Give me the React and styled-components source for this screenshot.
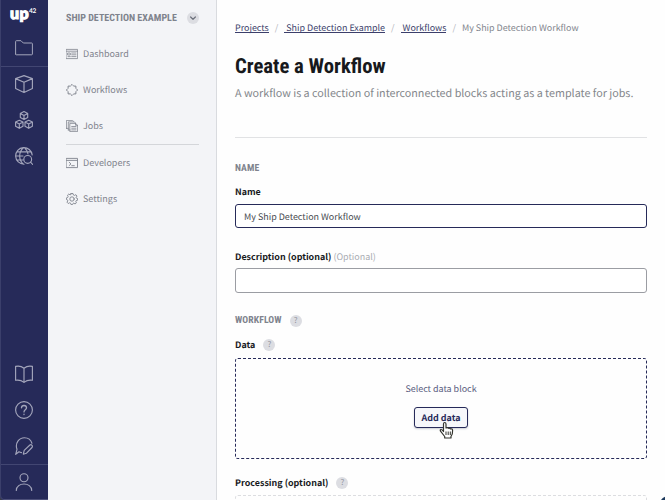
import React from 'react';
import styled, { createGlobalStyle, css } from 'styled-components';

const Global = createGlobalStyle`
  * { box-sizing: border-box; }
  html, body { margin: 0; padding: 0; overflow: hidden; background: #fefefe; }
  body {
    font-family: "Noto Sans CJK SC", "Noto Sans", sans-serif;
    font-size: 10px;
    color: #17191c;
    text-rendering: geometricPrecision;
  }
`;

const condensed = css`
  font-family: Roboto, sans-serif;
  font-weight: 700;
  font-stretch: 75%;
  white-space: nowrap;
`;

const Page = styled.div`
  position: relative;
  display: flex;
  width: 665px;
  height: 500px;
  overflow: hidden;
`;

const RailCorner = styled.div`
  flex: 0 0 48px;
  display: flex;
  background: #3c3f46;
`;

const Rail = styled.nav`
  display: flex;
  flex-direction: column;
  flex: 0 0 48px;
  background: #262a59;
  border-left: 1px solid #3b3f6b;
  box-shadow: inset 0 -1px 0 #4d507a;
  border-bottom-left-radius: 4px;
`;

const Logo = styled.div`
  display: flex;
  height: 30px;
  padding: 6px 0 0 9px;
`;

const RailItem = styled.a`
  display: flex;
  align-items: center;
  justify-content: center;
  height: 36px;
  padding-right: 1px;
  color: #a3a5bb;
`;

const RailRule = styled.div`
  height: 1px;
  margin-bottom: -1px;
  background: #424672;
`;

const Spacer = styled.div`
  flex: 1;
`;

const Panel = styled.aside`
  flex: 0 0 169px;
  padding: 11px 17px 0 18px;
  background: #f3f4f7;
  border-right: 1px solid #d9dbdf;
`;

const ProjectHeader = styled.div`
  display: flex;
  align-items: center;
  justify-content: space-between;
  height: 13px;
  margin-bottom: 12px;
`;

const ProjectName = styled.div`
  ${condensed}
  padding-top: 1px;
  font-size: 10px;
  line-height: 13px;
  color: #7f838d;
`;

const Round = styled.span`
  display: flex;
  align-items: center;
  justify-content: center;
  width: 12px;
  height: 12px;
  border-radius: 50%;
  background: #dcdde2;
  color: #6d717c;
`;

const NavItem = styled.a`
  display: flex;
  align-items: center;
  gap: 5px;
  height: 36px;
  font-size: 9px;
  line-height: 14px;
  color: #7f838d;
`;

const NavRule = styled.div`
  height: 1px;
  background: #d4d6da;
`;

const Main = styled.main`
  flex: 1;
  padding: 21px 18px 0;
  display: flex;
  flex-direction: column;

  > * { flex-shrink: 0; }
`;

const Crumbs = styled.div`
  display: flex;
  height: 14px;
  font-size: 8.95px;
  line-height: 14px;
  color: #83868e;
  white-space: pre;
`;

const CrumbLink = styled.a`
  height: 12px;
  padding-left: ${(p) => p.$lead || 0}px;
  border-bottom: 1px solid #3c3f6b;
  color: #3c3f6b;
`;

const Slash = styled.span`
  width: 15.5px;
  text-align: center;
  color: #b3b5bb;
`;

const Title = styled.h1`
  ${condensed}
  margin: 18px 0 0;
  font-size: 20.7px;
  line-height: 28px;
`;

const Subtitle = styled.p`
  height: 46px;
  margin: 5px 0 0;
  font-size: 10.75px;
  line-height: 16px;
  white-space: nowrap;
  color: #83868b;
`;

const Rule = styled.div`
  height: 1px;
  margin-top: 5px;
  background: #e1e2e4;
`;

const Section = styled.h2`
  ${condensed}
  display: flex;
  align-items: center;
  gap: 8px;
  height: 12px;
  margin: ${(p) => p.$top}px 0 0;
  font-size: 9.7px;
  letter-spacing: 0.1px;
  line-height: 12px;
  color: #7f838d;
`;

const Label = styled.label`
  display: flex;
  align-items: center;
  gap: ${(p) => p.$gap || 8}px;
  height: 14px;
  margin-top: ${(p) => p.$top}px;
  font-size: 8.95px;
  font-weight: 700;
  line-height: 14px;
  white-space: nowrap;
`;

const Optional = styled.span`
  font-weight: 400;
  color: #a9abb2;
`;

const Field = styled.input`
  display: block;
  width: 412px;
  height: ${(p) => p.$height}px;
  margin-top: ${(p) => p.$top}px;
  padding: 0 8px;
  border: 1px solid ${(p) => (p.$active ? '#262a59' : '#9b9da3')};
  border-radius: 3px;
  outline: none;
  background: #fff;
  font: 8.95px/14px "Noto Sans CJK SC", sans-serif;
  text-rendering: geometricPrecision;
  color: #484b50;
`;

const Help = styled(Round)`
  font: 400 8px/12px "Noto Sans CJK SC", sans-serif;
  letter-spacing: 0;
  color: #8e919b;
`;

const Drop = styled.section`
  display: flex;
  flex-direction: column;
  align-items: center;
  flex: 0 0 101px;
  width: 412px;
  margin-top: ${(p) => p.$top}px;
  padding-top: 23px;
  border: 1px dashed ${(p) => (p.$muted ? '#dcdde0' : '#262a59')};
  border-radius: 3px;
`;

const Hint = styled.div`
  font-size: 8.95px;
  line-height: 14px;
  color: #5a5d80;
`;

const AddButton = styled.button`
  position: relative;
  width: 54px;
  height: 21px;
  margin-top: 11px;
  padding: 0;
  border: 1px solid #262a59;
  border-radius: 3px;
  background: #f6f7fa;
  box-shadow: 0 1px 2px #c9ccd2;
  font: 700 8.95px/17px "Noto Sans CJK SC", sans-serif;
  text-rendering: geometricPrecision;
  white-space: nowrap;
  color: #262a59;
`;

const Pointer = styled.svg`
  position: absolute;
  left: 23px;
  top: 13px;
`;

const ChatCorner = styled.svg`
  position: absolute;
  right: 0;
  bottom: 0;
`;

function Icon({ size = 18, stroke = 1, children }) {
  return (
    <svg width={size} height={size} viewBox={`0 0 ${size} ${size}`} fill="none" stroke="currentColor"
      strokeWidth={stroke} strokeLinejoin="round" strokeLinecap="round">
      {children}
    </svg>
  );
}

const Cube = ({ x, y }) => (
  <path transform={`translate(${x} ${y})`} d="M4 .3 7.7 2.1V6.3L4 8.3 .3 6.3V2.1ZM.3 2.1 4 4.1 7.7 2.1M4 4.1V8.3" />
);

const icons = {
  folder: <Icon><path d="M.6 15V2.5Q.6 1.7 1.4 1.7H6L8.3 4H16.6Q17.4 4 17.4 4.8V15Q17.4 15.8 16.6 15.8H1.4Q.6 15.8.6 15Z" /></Icon>,
  cube: <Icon stroke={1.15}><path d="M9 .6 17.4 3.6V13.6L9 17.4.6 13.6V3.6ZM.6 3.6 9 7.2 17.4 3.6M9 7.2V17.4" /></Icon>,
  cubes: <Icon stroke={1.15}><Cube x={5} y={0.3} /><Cube x={0.3} y={9} /><Cube x={9.7} y={9} /></Icon>,
  globe: (
    <Icon stroke={1.15}>
      <path d="M9 17.2A8.3 8.3 0 1 1 17.2 8M.8 9H8M2 4.8H15.5M1.8 13H8M8.5.8C3.4 5 3.4 13 8.5 17.2M9.5.8C11.5 2.5 12.7 5 13 7" />
      <circle cx="12.7" cy="12.4" r="3.9" /><path d="M15.5 15.2 17.7 17.4" />
    </Icon>
  ),
  book: <Icon stroke={1.15}><path d="M9 3.2C6.5 1.2 3.5.7.6 1.4V15.3C3.5 14.8 6.5 15.4 9 17.4 11.5 15.4 14.5 14.8 17.4 15.3V1.4C14.5.7 11.5 1.2 9 3.2ZM9 3.2V17.4" /></Icon>,
  help: (
    <Icon stroke={1.15}><circle cx="9" cy="9" r="8.4" /><path d="M6.5 6.8C6.6 3.7 11.5 3.8 11.5 6.8 11.5 8.7 9 8.7 9 10.9M9 13.2V13.5" strokeWidth="1.3" /></Icon>
  ),
  feedback: (
    <Icon stroke={1.15}>
      <path d="M6.5 15.6C5.5 15.4 4.8 15.2 4 14.8L.7 17.3 2 12.3C-.3 6 4.3.7 9.4.7 13.2.7 16 3 17 6.3" />
      <path d="M9.2 13.4 14.9 8Q16 7.3 17 8.3 17.8 9.5 17 10.5L11.3 16.3 8.3 17.2Z" />
    </Icon>
  ),
  user: <Icon stroke={1.15}><circle cx="9" cy="4.7" r="4" /><path d="M1.3 17.4C1.3 8.9 16.7 8.9 16.7 17.4" /></Icon>,
  dashboard: (
    <Icon size={12} stroke={0.8}><path d="M.4 1.4H11.6V10.6H.4ZM.4 3.2H11.6M2 5H4.3V7H2ZM2 8.6H4.3M5.7 5H10M5.7 6.8H10M5.7 8.6H10" /></Icon>
  ),
  workflows: (
    <Icon size={12} stroke={1}>
      <path d="M2.1 4.1V2.1H4.1M7.9 2.1H9.9V4.1M9.9 7.9V9.9H7.9M4.1 9.9H2.1V7.9" strokeDasharray="1.6 .8" />
      <path d="M4.9 1.5 6 .4 7.1 1.5M4.9 10.5 6 11.6 7.1 10.5M1.5 4.9.4 6 1.5 7.1M10.5 4.9 11.6 6 10.5 7.1" />
    </Icon>
  ),
  jobs: (
    <Icon size={12} stroke={0.8}>
      <path d="M4.2 3.4H9.5L11.6 5.3V11.6H4.2ZM9.5 3.4V5.3H11.6M5.7 6.5H10M5.7 8.2H10M5.7 9.9H10M2.3 10V1.9H8.4L9.3 2.8M.4 8.4V.4H6.5L7.4 1.2M.4 8.4H2.3M2.3 10H4.2" />
    </Icon>
  ),
  developers: <Icon size={12} stroke={0.9}><path d="M.5 1.4H11.5V10.6H.5ZM.5 3.4H11.5M3.2 5.3 5 6.9 3.2 8.5M5.7 8.7H8.3" /></Icon>,
  settings: (
    <Icon size={12} stroke={0.9}>
      <path d="M5 .5H7L7.4 2 8.6 2.4 9.9 1.7 11 3.1 10.1 4.4 10.4 5.2 11.6 5.5V7.2L10.2 7.6 9.8 8.5 10.4 9.9 9 11 7.8 10.1 7 10.4 6.6 11.6H5L4.6 10.2 3.6 9.8 2.2 10.5 1 9.2 1.8 7.8 1.5 6.9.4 6.5V4.9L1.7 4.5 2.1 3.5 1.5 2.2 2.8 1 4 1.9 4.7 1.6Z" />
      <circle cx="6" cy="6" r="2.2" />
    </Icon>
  ),
};

const LogoType = styled.div`
  display: flex;
  align-items: flex-start;
  height: 16px;
  color: #fff;
  font: 900 16px/16px Lato, sans-serif;
  letter-spacing: 0.4px;
  -webkit-text-stroke: 1.1px #fff;
`;

const LogoSup = styled.span`
  margin: 2px 0 0 0;
  font: 700 6.5px/7px Lato, sans-serif;
  letter-spacing: -0.2px;
  -webkit-text-stroke: 0;
`;

function HelpDot() {
  return <Help>?</Help>;
}

export default function App() {
  return (
    <>
      <Global />
      <Page>
        <RailCorner>
          <Rail>
            <Logo><LogoType>up<LogoSup>42</LogoSup></LogoType></Logo>
            <RailItem>{icons.folder}</RailItem>
            <RailRule />
            <RailItem>{icons.cube}</RailItem>
            <RailItem>{icons.cubes}</RailItem>
            <RailItem>{icons.globe}</RailItem>
            <Spacer />
            <RailItem>{icons.book}</RailItem>
            <RailItem>{icons.help}</RailItem>
            <RailItem>{icons.feedback}</RailItem>
            <RailRule />
            <RailItem>{icons.user}</RailItem>
          </Rail>
        </RailCorner>
        <Panel>
          <ProjectHeader>
            <ProjectName>SHIP DETECTION EXAMPLE</ProjectName>
            <Round><Icon size={12} stroke={1.2}><path d="M3.6 5 6 7.3 8.4 5" /></Icon></Round>
          </ProjectHeader>
          <NavItem>{icons.dashboard}Dashboard</NavItem>
          <NavItem>{icons.workflows}Workflows</NavItem>
          <NavItem>{icons.jobs}Jobs</NavItem>
          <NavRule />
          <NavItem>{icons.developers}Developers</NavItem>
          <NavItem>{icons.settings}Settings</NavItem>
        </Panel>
        <Main>
          <Crumbs>
            <CrumbLink>Projects</CrumbLink><Slash>/</Slash>
            <CrumbLink $lead={2}>Ship Detection Example</CrumbLink><Slash>/</Slash>
            <CrumbLink $lead={2}>Workflows</CrumbLink><Slash>/</Slash>
            <span>My Ship Detection Workflow</span>
          </Crumbs>
          <Title>Create a Workflow</Title>
          <Subtitle>A workflow is a collection of interconnected blocks acting as a template for jobs.</Subtitle>
          <Rule />
          <Section $top={25}>NAME</Section>
          <Label $top={10}>Name</Label>
          <Field $active $top={5} $height={24} defaultValue="My Ship Detection Workflow" />
          <Label $top={22} $gap={2}>Description (optional)<Optional>(Optional)</Optional></Label>
          <Field $top={4} $height={25} />
          <Section $top={22}>WORKFLOW<HelpDot /></Section>
          <Label $top={11}>Data<HelpDot /></Label>
          <Drop $top={6}>
            <Hint>Select data block</Hint>
            <AddButton>
              Add data
              <Pointer width="17" height="18" viewBox="0 0 17 18">
                <path d="M5.5 10.5V3Q5.5 1.5 6.7 1.5T8 3V7Q9.5 6 10.3 7.3 11.8 6.6 12.5 8 14.5 7.4 14.6 9.5 14.8 13 13 15.4V17H6.7V15.5L2.5 10.2Q1.8 8.7 3 8.5 4 8.4 5.5 10.5Z" fill="#fff" stroke="#34352f" strokeWidth="1.2" strokeLinejoin="round" />
                <path d="M8 10.5V14M10.2 10.5V14M12.3 10.5V14" stroke="#34352f" strokeWidth="1" />
              </Pointer>
            </AddButton>
          </Drop>
          <Label $top={17}>Processing (optional)<HelpDot /></Label>
          <Drop $top={5} $muted />
        </Main>
        <ChatCorner width="4" height="4" viewBox="0 0 4 4">
          <path d="M0 4Q1.5 1.5 4 .8V4Z" fill="#1d3a5d" />
        </ChatCorner>
      </Page>
    </>
  );
}
